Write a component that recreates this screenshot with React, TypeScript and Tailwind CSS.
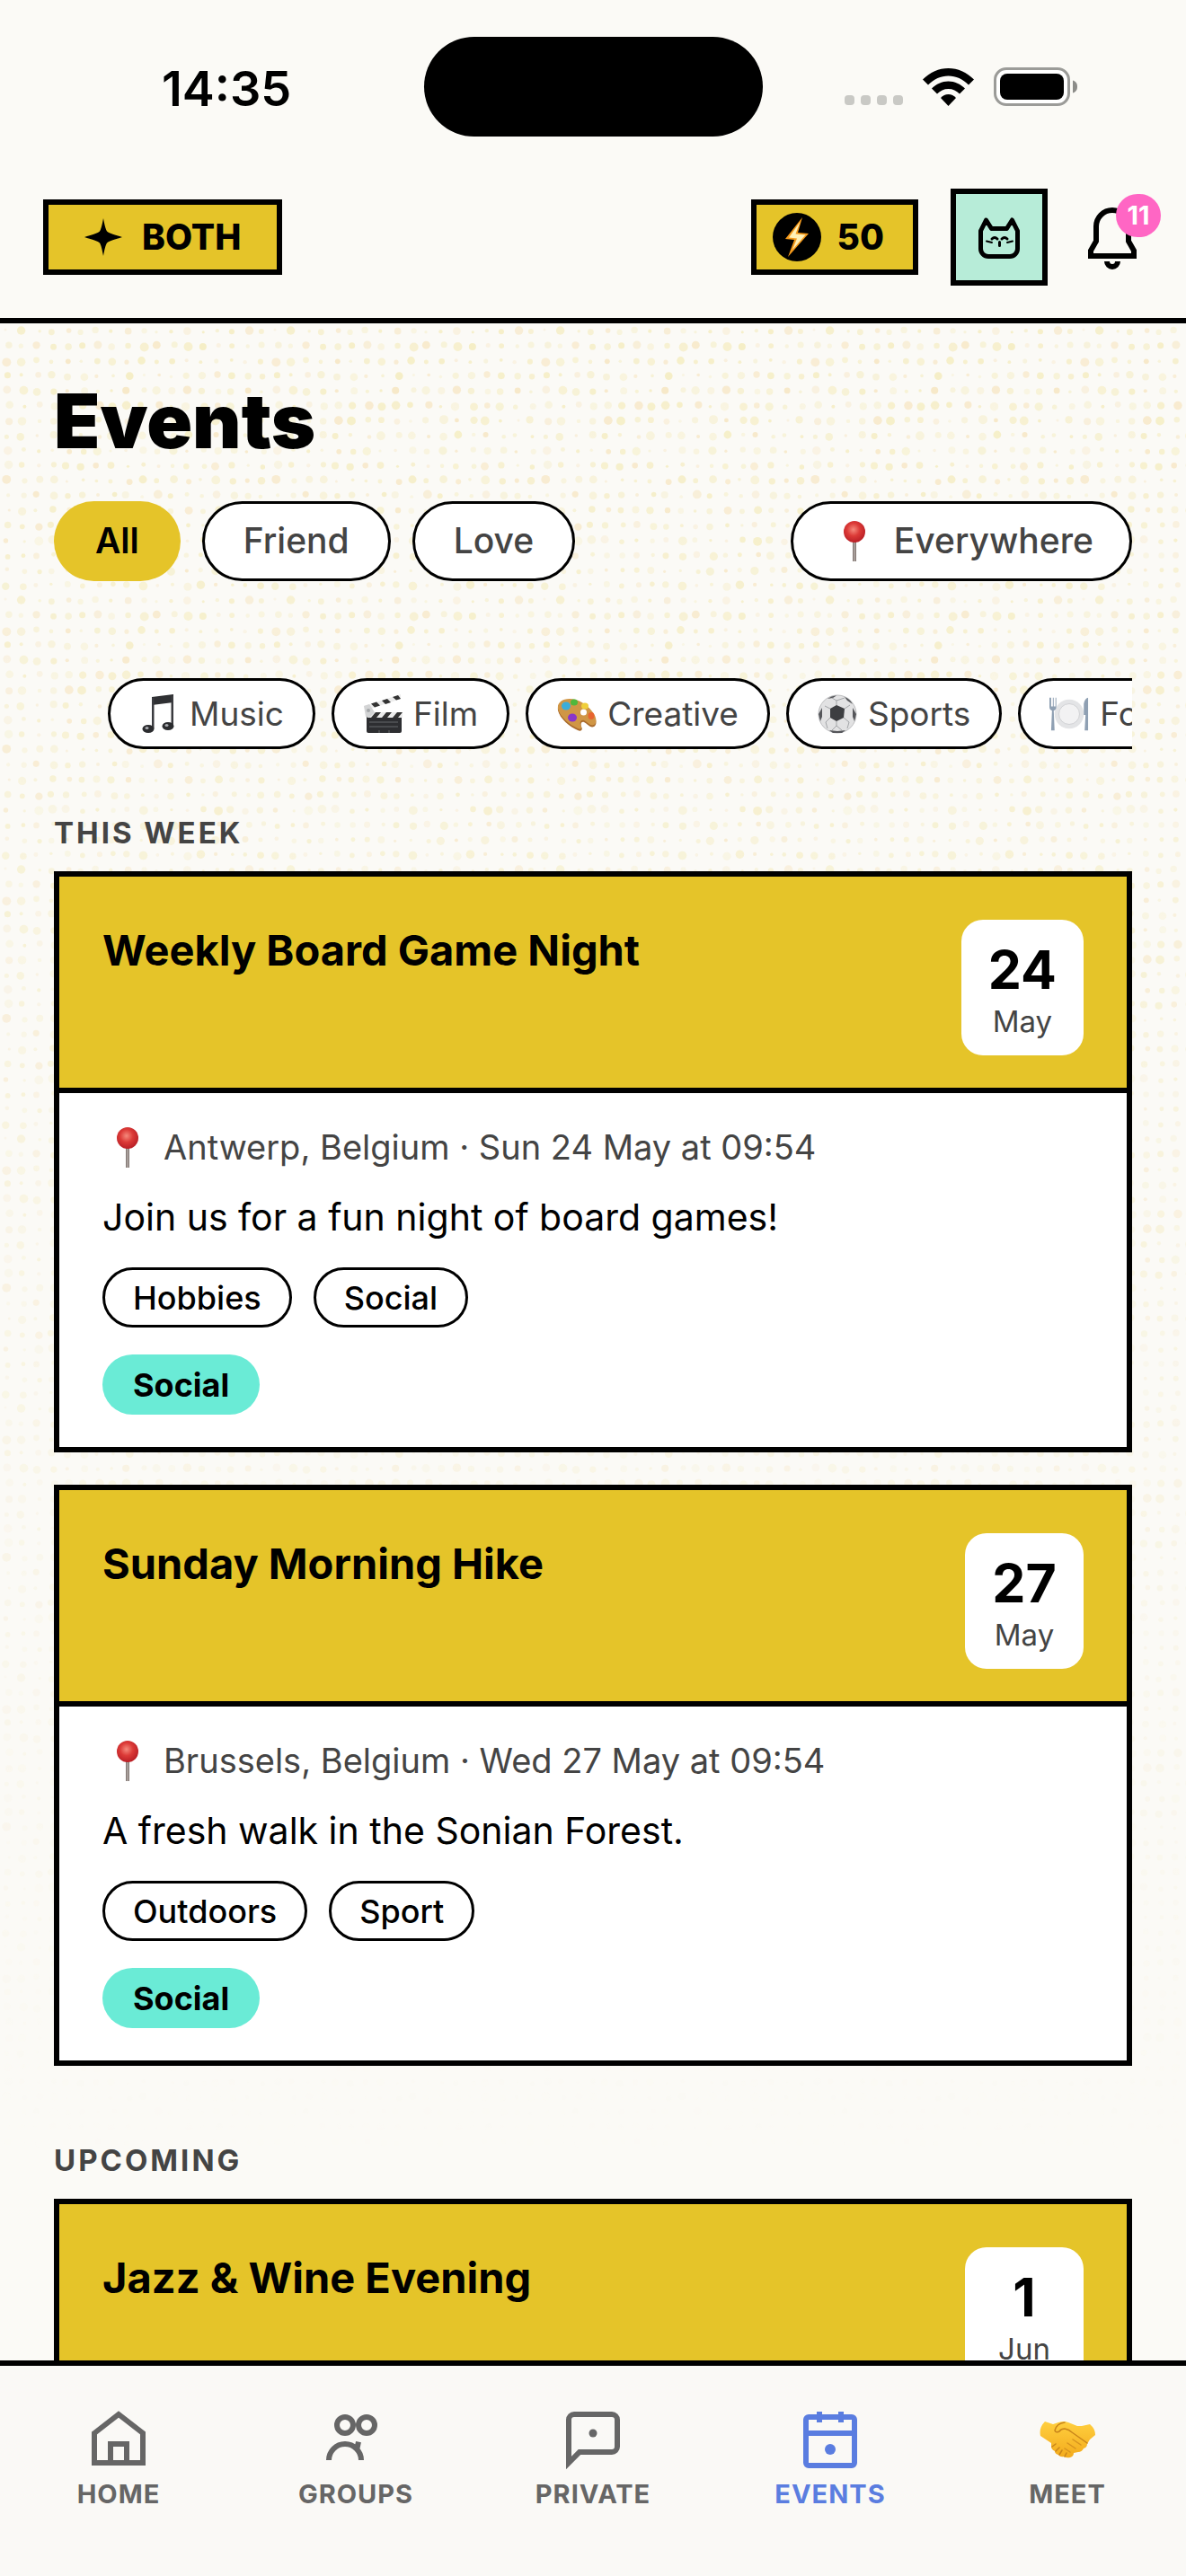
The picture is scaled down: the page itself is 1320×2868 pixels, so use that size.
import React from 'react'

type IconProps = { className?: string }

const StarIcon = () => (
  <svg className="h-[42px] w-[42px]" viewBox="0 0 42 42" fill="currentColor" aria-hidden="true">
    <path d="M21 0c1.500 8 2.500 12 4 14.500C28 17 34 18.500 42 21c-8 2.500-14 4-17 6.500-1.500 2.500-2.500 6.500-4 14.500-1.500-8-2.500-12-4-14.500C14 25 8 23.500 0 21c8-2.500 14-4 17-6.500C18.500 12 19.500 8 21 0z" />
  </svg>
)

const BoltIcon = () => (
  <svg className="h-11 w-7" viewBox="0 0 28 44" aria-hidden="true">
    <path d="M20 0L1 24l10 1L4 44l23-26-12-1z" fill="#f59a1b" />
    <path d="M17.500 5L5 22.500l9 1L9 36l14.500-16.500-11-1z" fill="#fff1b8" />
  </svg>
)

const CatIcon = () => (
  <svg className="h-12 w-12" viewBox="0 0 48 48" fill="none" stroke="currentColor" strokeWidth="5" strokeLinejoin="round" strokeLinecap="round" aria-hidden="true">
    <path d="M3.500 17L9.500 5l6 9.500h17L38.500 5l6 12v20a8.500 8.500 0 0 1-8.500 8.500H12A8.500 8.500 0 0 1 3.500 37z" />
    <path d="M16 26q3-3 6 0M27 26q3-3 6 0M24.500 29.500v4" strokeWidth="3" />
    <path d="M10 28.500l6 1.500M39 28.500L33 30" strokeWidth="2" />
  </svg>
)

const BellIcon = () => (
  <svg className="h-[72px] w-[72px]" viewBox="0 0 24 24" fill="none" stroke="currentColor" strokeWidth="2" aria-hidden="true">
    <path d="M18 8A6 6 0 0 0 6 8v5.500L4 17v2h16v-2l-2-3.500z" />
    <path d="M10 21a2 2 0 0 0 4 0" />
  </svg>
)

const PinIcon = ({ className }: IconProps) => (
  <svg className={className} viewBox="0 0 24 45" aria-hidden="true">
    <defs>
      <radialGradient id="pin-head" cx="0.45" cy="0.4" r="0.6">
        <stop offset="0" stopColor="#f58a7c" />
        <stop offset="0.5" stopColor="#dc3a37" />
        <stop offset="1" stopColor="#b91f26" />
      </radialGradient>
    </defs>
    <path d="M10 22h4v23h-4z" fill="#857a76" />
    <path d="M11.500 22h1v23h-1z" fill="#c9c2be" />
    <circle cx="12" cy="12" r="12" fill="url(#pin-head)" />
  </svg>
)

const MusicIcon = () => (
  <svg className="h-11 w-11" viewBox="0 0 44 44" aria-hidden="true">
    <path d="M14 3l24-3v9l-24 3z" fill="#2f3033" />
    <path d="M14 4h2.500v34H14zM35.500 2H38v33h-2.500z" fill="#3a3b3f" />
    <ellipse cx="10" cy="38.500" rx="6.500" ry="4.500" fill="#2b2c2f" />
    <ellipse cx="32" cy="35.500" rx="6.500" ry="4.500" fill="#2b2c2f" />
    <ellipse cx="8.500" cy="37.500" rx="2" ry="1.500" fill="#a9abb0" />
    <ellipse cx="30.500" cy="34.500" rx="2" ry="1.500" fill="#a9abb0" />
  </svg>
)

const FilmIcon = () => (
  <svg className="h-11 w-11" viewBox="0 0 44 44" aria-hidden="true">
    <path d="M4 25h39v16a2 2 0 0 1-2 2H6a2 2 0 0 1-2-2z" fill="#2d2e31" />
    <path d="M7 31h32M7 36h32M18 40v3M29 40v3" stroke="#66686c" strokeWidth="1" />
    <path d="M5 20h39v6H5z" fill="#ececec" />
    <path d="M14 20h6l-5 6H9zM26 20h6l-5 6h-6zM38 20h6l-5 6h-6z" fill="#333" />
    <path d="M1 13L42 0v5L3 18z" fill="#ececec" />
    <path d="M9 10.500l6-2 4 4-6 2zM21 7l6-2 4 4-6 2zM33 3l6-2 3 4-5 1.500z" fill="#333" />
    <path d="M1 13l6-2 6 9-6 6-4-1z" fill="#d3d4d5" />
    <circle cx="6" cy="18" r="2" fill="#a5a7a9" />
  </svg>
)

const PaletteIcon = () => (
  <svg className="h-11 w-11" viewBox="0 0 44 44" aria-hidden="true">
    <path d="M14 6C5 6 0 11 1 18c2 9 13 18 22 22 4 2 6-1 4-4-1-3 0-6 3-5 4 2 7 7 11 5 4-2 3-9-2-15C33 12 23 6 14 6z" fill="#a96a2c" />
    <path d="M14 5C5 5 0 10 1 16c2 9 13 18 22 22 4 2 5-1 3-4-1-3 1-6 4-5 4 2 7 7 11 5 4-2 3-9-2-15C33 11 23 5 14 5z" fill="#d09645" />
    <circle cx="29.500" cy="20" r="3.500" fill="#fff" />
    <ellipse cx="10" cy="13" rx="5" ry="4.500" fill="#3badd9" />
    <ellipse cx="19" cy="9" rx="4" ry="3.500" fill="#4fb83c" />
    <ellipse cx="31" cy="13" rx="4" ry="3.500" fill="#f0cf3b" />
    <ellipse cx="17" cy="26" rx="5" ry="4.500" fill="#8a35c9" />
    <ellipse cx="38" cy="24" rx="3.500" ry="4" fill="#e8642f" />
  </svg>
)

const BallIcon = () => (
  <svg className="h-11 w-11" viewBox="0 0 44 44" aria-hidden="true">
    <circle cx="22" cy="22" r="21" fill="#e2e2e3" stroke="#bcbdbf" />
    <path d="M14 16l7-4 9 4-1 10-8 4-7-4z" fill="#3d3e41" />
    <path d="M11 5q5-4 10-3.500L17 4zM30 3q6 2 9 8l-6-4zM1 22l4-7v10l-2 5zM43 22l-4-7v10l2 5zM13 40l9 1 9-1-4 3H17z" fill="#55565a" />
    <path d="M21 12V7l-5-3M21 7l9-3M30 16l6-4M29 26l6 5-2 7M14 26l-5 5 2 7M14 16l-6-3M21 30v5l-5 5M21 35l6 5" fill="none" stroke="#a3a5a8" />
  </svg>
)

const PlateIcon = () => (
  <svg className="h-11 w-11" viewBox="0 0 46 44" aria-hidden="true">
    <circle cx="23" cy="22" r="17" fill="#e3e4e6" />
    <circle cx="23" cy="22" r="12" fill="#f2f2f3" stroke="#cfd0d3" />
    <path d="M0 3v11q0 3 3 4L2 41h4L5 18q3-1 3-4V3H7v10H5V3H4v10H2V3z" fill="#8fa0b3" />
    <path d="M40 23V10q1-6 5-7v38h-4l1-18z" fill="#8fa0b3" />
  </svg>
)

const HandshakeIcon = () => (
  <svg className="h-[42px] w-[62px]" viewBox="0 0 62 42" strokeLinecap="round" strokeLinejoin="round" aria-hidden="true">
    <defs>
      <linearGradient id="skin" x1="0" y1="0" x2="0" y2="1">
        <stop offset="0" stopColor="#ffcf3f" />
        <stop offset="1" stopColor="#f3ab1c" />
      </linearGradient>
    </defs>
    <path
      d="M6 0l9 3 6-2q6-2 11 0l10 4h5l9-2q6 5 6 12l-6 5-3 5q0 4-4 5-2 4-6 4l-5 1q0 4-4 5-4 1-7-1-4 1-6-2-4-1-4-4-4-2-4-5v-4L1 16Q-1 7 6 0z"
      fill="url(#skin)"
    />
    <path d="M28 1q-9 1-11 9 1 3 5 1 2-3 6-3 5 1 8 4l17 12" fill="none" stroke="#c9851a" strokeWidth="1.500" />
    <path d="M37 20l9 6M31 24l9 6M28 30l6 4" fill="none" stroke="#d6931f" strokeWidth="1.500" />
    <path d="M14 28l4-3M18 33l4-4M22 37l3-5M28 39l2-4" fill="none" stroke="#c9851a" strokeWidth="1.500" />
  </svg>
)

const TabIcon = ({ children }: { children: React.ReactNode }) => (
  <svg className="h-[72px] w-[72px]" viewBox="0 0 24 24" fill="none" stroke="currentColor" strokeWidth="2" aria-hidden="true">
    {children}
  </svg>
)

const tabs = [
  {
    label: 'Home',
    icon: (
      <TabIcon>
        <path d="M3 10l9-7 9 7v11H3zM9 21v-7h6v7" />
      </TabIcon>
    ),
  },
  {
    label: 'Groups',
    icon: (
      <TabIcon>
        <circle cx="8" cy="7" r="3" />
        <circle cx="16" cy="7" r="3" />
        <path d="M2 20a6 6 0 0 1 12 0M13 13.200l-.500 2.300" />
      </TabIcon>
    ),
  },
  {
    label: 'Private',
    icon: (
      <TabIcon>
        <path d="M5 3h14a2 2 0 0 1 2 2v10a2 2 0 0 1-2 2H7l-4 4V5a2 2 0 0 1 2-2z" />
        <circle cx="12" cy="10" r="1.500" fill="currentColor" stroke="none" />
      </TabIcon>
    ),
  },
  {
    label: 'Events',
    active: true,
    icon: (
      <TabIcon>
        <rect x="3" y="4" width="18" height="18" rx="1" />
        <path d="M3 10h18M8 2v4M16 2v4" />
        <circle cx="12" cy="16" r="2" fill="currentColor" stroke="none" />
      </TabIcon>
    ),
  },
  {
    label: 'Meet',
    icon: (
      <span className="flex h-[72px] items-center pt-1">
        <HandshakeIcon />
      </span>
    ),
  },
]

const categories = [
  { label: 'Music', icon: <MusicIcon /> },
  { label: 'Film', icon: <FilmIcon /> },
  { label: 'Creative', icon: <PaletteIcon /> },
  { label: 'Sports', icon: <BallIcon /> },
  { label: 'Food', icon: <PlateIcon /> },
]

type Event = {
  title: string
  day: string
  month: string
  details?: {
    place: string
    description: string
    tags: string[]
    type: string
  }
}

const thisWeek: Event[] = [
  {
    title: 'Weekly Board Game Night',
    day: '24',
    month: 'May',
    details: {
      place: 'Antwerp, Belgium · Sun 24 May at 09:54',
      description: 'Join us for a fun night of board games!',
      tags: ['Hobbies', 'Social'],
      type: 'Social',
    },
  },
  {
    title: 'Sunday Morning Hike',
    day: '27',
    month: 'May',
    details: {
      place: 'Brussels, Belgium · Wed 27 May at 09:54',
      description: 'A fresh walk in the Sonian Forest.',
      tags: ['Outdoors', 'Sport'],
      type: 'Social',
    },
  },
]

const upcoming: Event[] = [{ title: 'Jazz & Wine Evening', day: '1', month: 'Jun' }]

// Halftone dots: an 18x18 tile with varied radii, repeated over the page
const STEP = 300 / 18
const noise = (n: number) => Math.abs(Math.sin(n) * 43758.5453) % 1
const dots = Array.from({ length: 324 }, (_, i) => ({
  cx: (i % 18) * STEP + 6 + noise(i * 78.233) * 5,
  cy: Math.floor(i / 18) * STEP + 7 + noise(i * 39.425) * 3,
  r: 1.5 + noise(i * 12.9898) * 3.5,
  opacity: 0.4 + noise(i * 5.137) * 0.6,
}))

const DotBackground = () => (
  <svg className="absolute inset-0 h-full w-full" aria-hidden="true">
    <defs>
      <pattern id="dots" width="300" height="300" patternUnits="userSpaceOnUse">
        {dots.map((dot, i) => (
          <circle key={i} cx={dot.cx} cy={dot.cy} r={dot.r} opacity={dot.opacity} fill={i % 4 === 0 ? '#f5dca8' : '#f2e6a6'} />
        ))}
      </pattern>
      <linearGradient id="fade" x1="0" y1="0" x2="0" y2="1">
        <stop offset="0" stopColor="#fff" stopOpacity="0.6" />
        <stop offset="0.25" stopColor="#fff" stopOpacity="0.45" />
        <stop offset="0.9" stopColor="#fff" stopOpacity="0" />
      </linearGradient>
      <mask id="dots-mask">
        <rect width="100%" height="100%" fill="url(#fade)" />
      </mask>
    </defs>
    <rect width="100%" height="100%" fill="url(#dots)" mask="url(#dots-mask)" />
  </svg>
)

const StatusBar = () => (
  <div className="grid grid-cols-[1fr_auto_1fr] items-center px-[120px] pt-[41px]">
    <span className="pt-1 pl-[60px] text-[54px] leading-[60px] font-semibold">14:35</span>
    <div className="h-[111px] w-[377px] rounded-full bg-black" />
    <div className="flex items-center justify-end gap-[22px]">
      <div className="flex gap-[7px] pt-[30px]">
        {[0, 1, 2, 3].map((i) => (
          <span key={i} className="h-[11px] w-[11px] rounded-[4px] bg-[#c9c9c5]" />
        ))}
      </div>
      <svg className="h-[42px] w-[57px]" viewBox="0 0 57 42" fill="currentColor" aria-hidden="true">
        <path d="M28.500 0C39 0 49 4.500 57 12.500L51 18.500C44.500 12 37 8.500 28.500 8.500S12.500 12 6 18.500L0 12.500C8 4.500 18 0 28.500 0z" />
        <path d="M28.500 14.500c7 0 13.500 3 18.500 8l-6 6c-3.500-3.500-7.500-5.500-12.500-5.500s-9 2-12.500 5.500l-6-6c5-5 11.500-8 18.500-8z" />
        <path d="M28.500 29c3.500 0 6 1.500 8.500 4L28.500 42 20 33c2.500-2.500 5-4 8.500-4z" />
      </svg>
      <svg className="h-[43px] w-[94px]" viewBox="0 0 94 43" aria-hidden="true">
        <rect x="1.500" y="1.500" width="82" height="40" rx="12.500" fill="#fff" stroke="#9b9b98" strokeWidth="3" />
        <rect x="7" y="7" width="71" height="29" rx="8" />
        <path d="M88 14.500c4 1.500 5 4 5 7s-1 5.500-5 7z" fill="#8c8c89" />
      </svg>
    </div>
  </div>
)

const Header = () => (
  <header className="border-b-[6px] border-black bg-[#fbfaf6]">
    <StatusBar />
    <div className="flex items-center justify-between pt-[58px] pr-[46px] pb-9 pl-12">
      <button className="flex h-[84px] items-center gap-[22px] border-[6px] border-black bg-[#e5c429] px-10 text-[39px] font-extrabold">
        <StarIcon />
        BOTH
      </button>
      <div className="flex items-center gap-9">
        <button className="flex h-[84px] items-center gap-[18px] border-[6px] border-black bg-[#e5c429] pr-8 pl-[18px] text-[39px] font-extrabold">
          <span className="flex h-[54px] w-[54px] items-center justify-center rounded-full bg-black">
            <BoltIcon />
          </span>
          50
        </button>
        <button aria-label="Profile" className="flex h-[108px] w-[108px] items-center justify-center border-[6px] border-black bg-[#b7ecd8]">
          <CatIcon />
        </button>
        <button aria-label="Notifications" className="relative">
          <BellIcon />
          <span className="absolute -top-3 -right-[18px] flex h-12 w-[50px] items-center justify-center rounded-full bg-[#ff66c4] text-[29px] font-bold text-white">
            11
          </span>
        </button>
      </div>
    </div>
  </header>
)

const EventCard = ({ event }: { event: Event }) => (
  <article className="border-[6px] border-black bg-white">
    <div className="flex items-start justify-between border-b-[6px] border-black bg-[#e5c429] px-12 pt-12 pb-9">
      <h3 className="pt-1 text-[47px] leading-[60px] font-bold">{event.title}</h3>
      <div className="flex min-w-[132px] flex-col items-center rounded-3xl bg-white px-[30px] py-[18px]">
        <span className="text-[59px] leading-[75px] font-bold">{event.day}</span>
        <span className="text-[33px] leading-[40px] text-[#444]">{event.month}</span>
      </div>
    </div>
    {event.details && (
      <div className="px-12 py-9">
        <p className="flex h-12 items-center text-[38px] text-[#444]">
          <PinIcon className="mr-7 ml-4 h-[45px] w-6" />
          {event.details.place}
        </p>
        <p className="mt-6 text-[41px] leading-[60px]">{event.details.description}</p>
        <ul className="mt-[26px] flex gap-6">
          {event.details.tags.map((tag) => (
            <li key={tag} className="flex h-[67px] items-center rounded-full border-[3px] border-black px-[31px] text-[36px] font-medium">
              {tag}
            </li>
          ))}
        </ul>
        <div className="mt-[30px] flex">
          <span className="flex h-[67px] items-center rounded-full bg-[#6aebd6] px-[34px] text-[36px] font-bold">{event.details.type}</span>
        </div>
      </div>
    )}
  </article>
)

const EventSection = ({ title, events }: { title: string; events: Event[] }) => (
  <section>
    <h2 className="text-[33px] leading-[42px] font-bold tracking-[3px] text-[#444] uppercase">{title}</h2>
    <div className="mt-[22px] space-y-9">
      {events.map((event) => (
        <EventCard key={event.title} event={event} />
      ))}
    </div>
  </section>
)

const App: React.FC = () => {
  return (
    <div className="flex h-screen flex-col bg-[#fbfaf6] font-['Inter',sans-serif] text-black">
      <Header />

      <main className="relative min-h-0 flex-1 overflow-hidden">
        <DotBackground />
        <div className="relative h-full space-y-[84px] overflow-y-auto px-[60px] pt-[60px] [scrollbar-width:none]">
          <div>
            <h1 className="text-[84px] leading-[98px] font-black">Events</h1>
            <div className="mt-10 flex items-center gap-6">
              <button className="h-[89px] rounded-full bg-[#e5c429] px-[46px] text-[39px] font-semibold">All</button>
              <button className="h-[89px] rounded-full border-[3px] border-black bg-white px-[43px] text-[39px] font-medium text-[#444]">Friend</button>
              <button className="h-[89px] rounded-full border-[3px] border-black bg-white px-[43px] text-[39px] font-medium text-[#444]">Love</button>
              <button className="ml-auto flex h-[89px] items-center rounded-full border-[3px] border-black bg-white pr-10 pl-14 text-[39px] font-medium text-[#444]">
                <PinIcon className="mr-8 h-[45px] w-6" />
                Everywhere
              </button>
            </div>
            <div className="mt-[108px] flex gap-[18px] overflow-hidden pl-[60px]">
              {categories.map((category) => (
                <button
                  key={category.label}
                  className="flex h-[79px] shrink-0 items-center gap-3 rounded-full border-[3px] border-black bg-white px-8 text-[37px] text-[#444]"
                >
                  {category.icon}
                  {category.label}
                </button>
              ))}
            </div>
            <div className="mt-[72px]">
              <EventSection title="This week" events={thisWeek} />
            </div>
          </div>
          <EventSection title="Upcoming" events={upcoming} />
        </div>
      </main>

      <nav className="grid grid-cols-5 border-t-[6px] border-black bg-[#faf9f6] pt-[45px] pb-[72px]">
        {tabs.map((tab) => (
          <a
            key={tab.label}
            href={`#${tab.label.toLowerCase()}`}
            className={`flex flex-col items-center gap-1.5 text-[29px] leading-[39px] font-bold tracking-[1px] uppercase ${tab.active ? 'text-[#5a7de0]' : 'text-[#666]'}`}
          >
            {tab.icon}
            {tab.label}
          </a>
        ))}
      </nav>
    </div>
  )
}

export default App
